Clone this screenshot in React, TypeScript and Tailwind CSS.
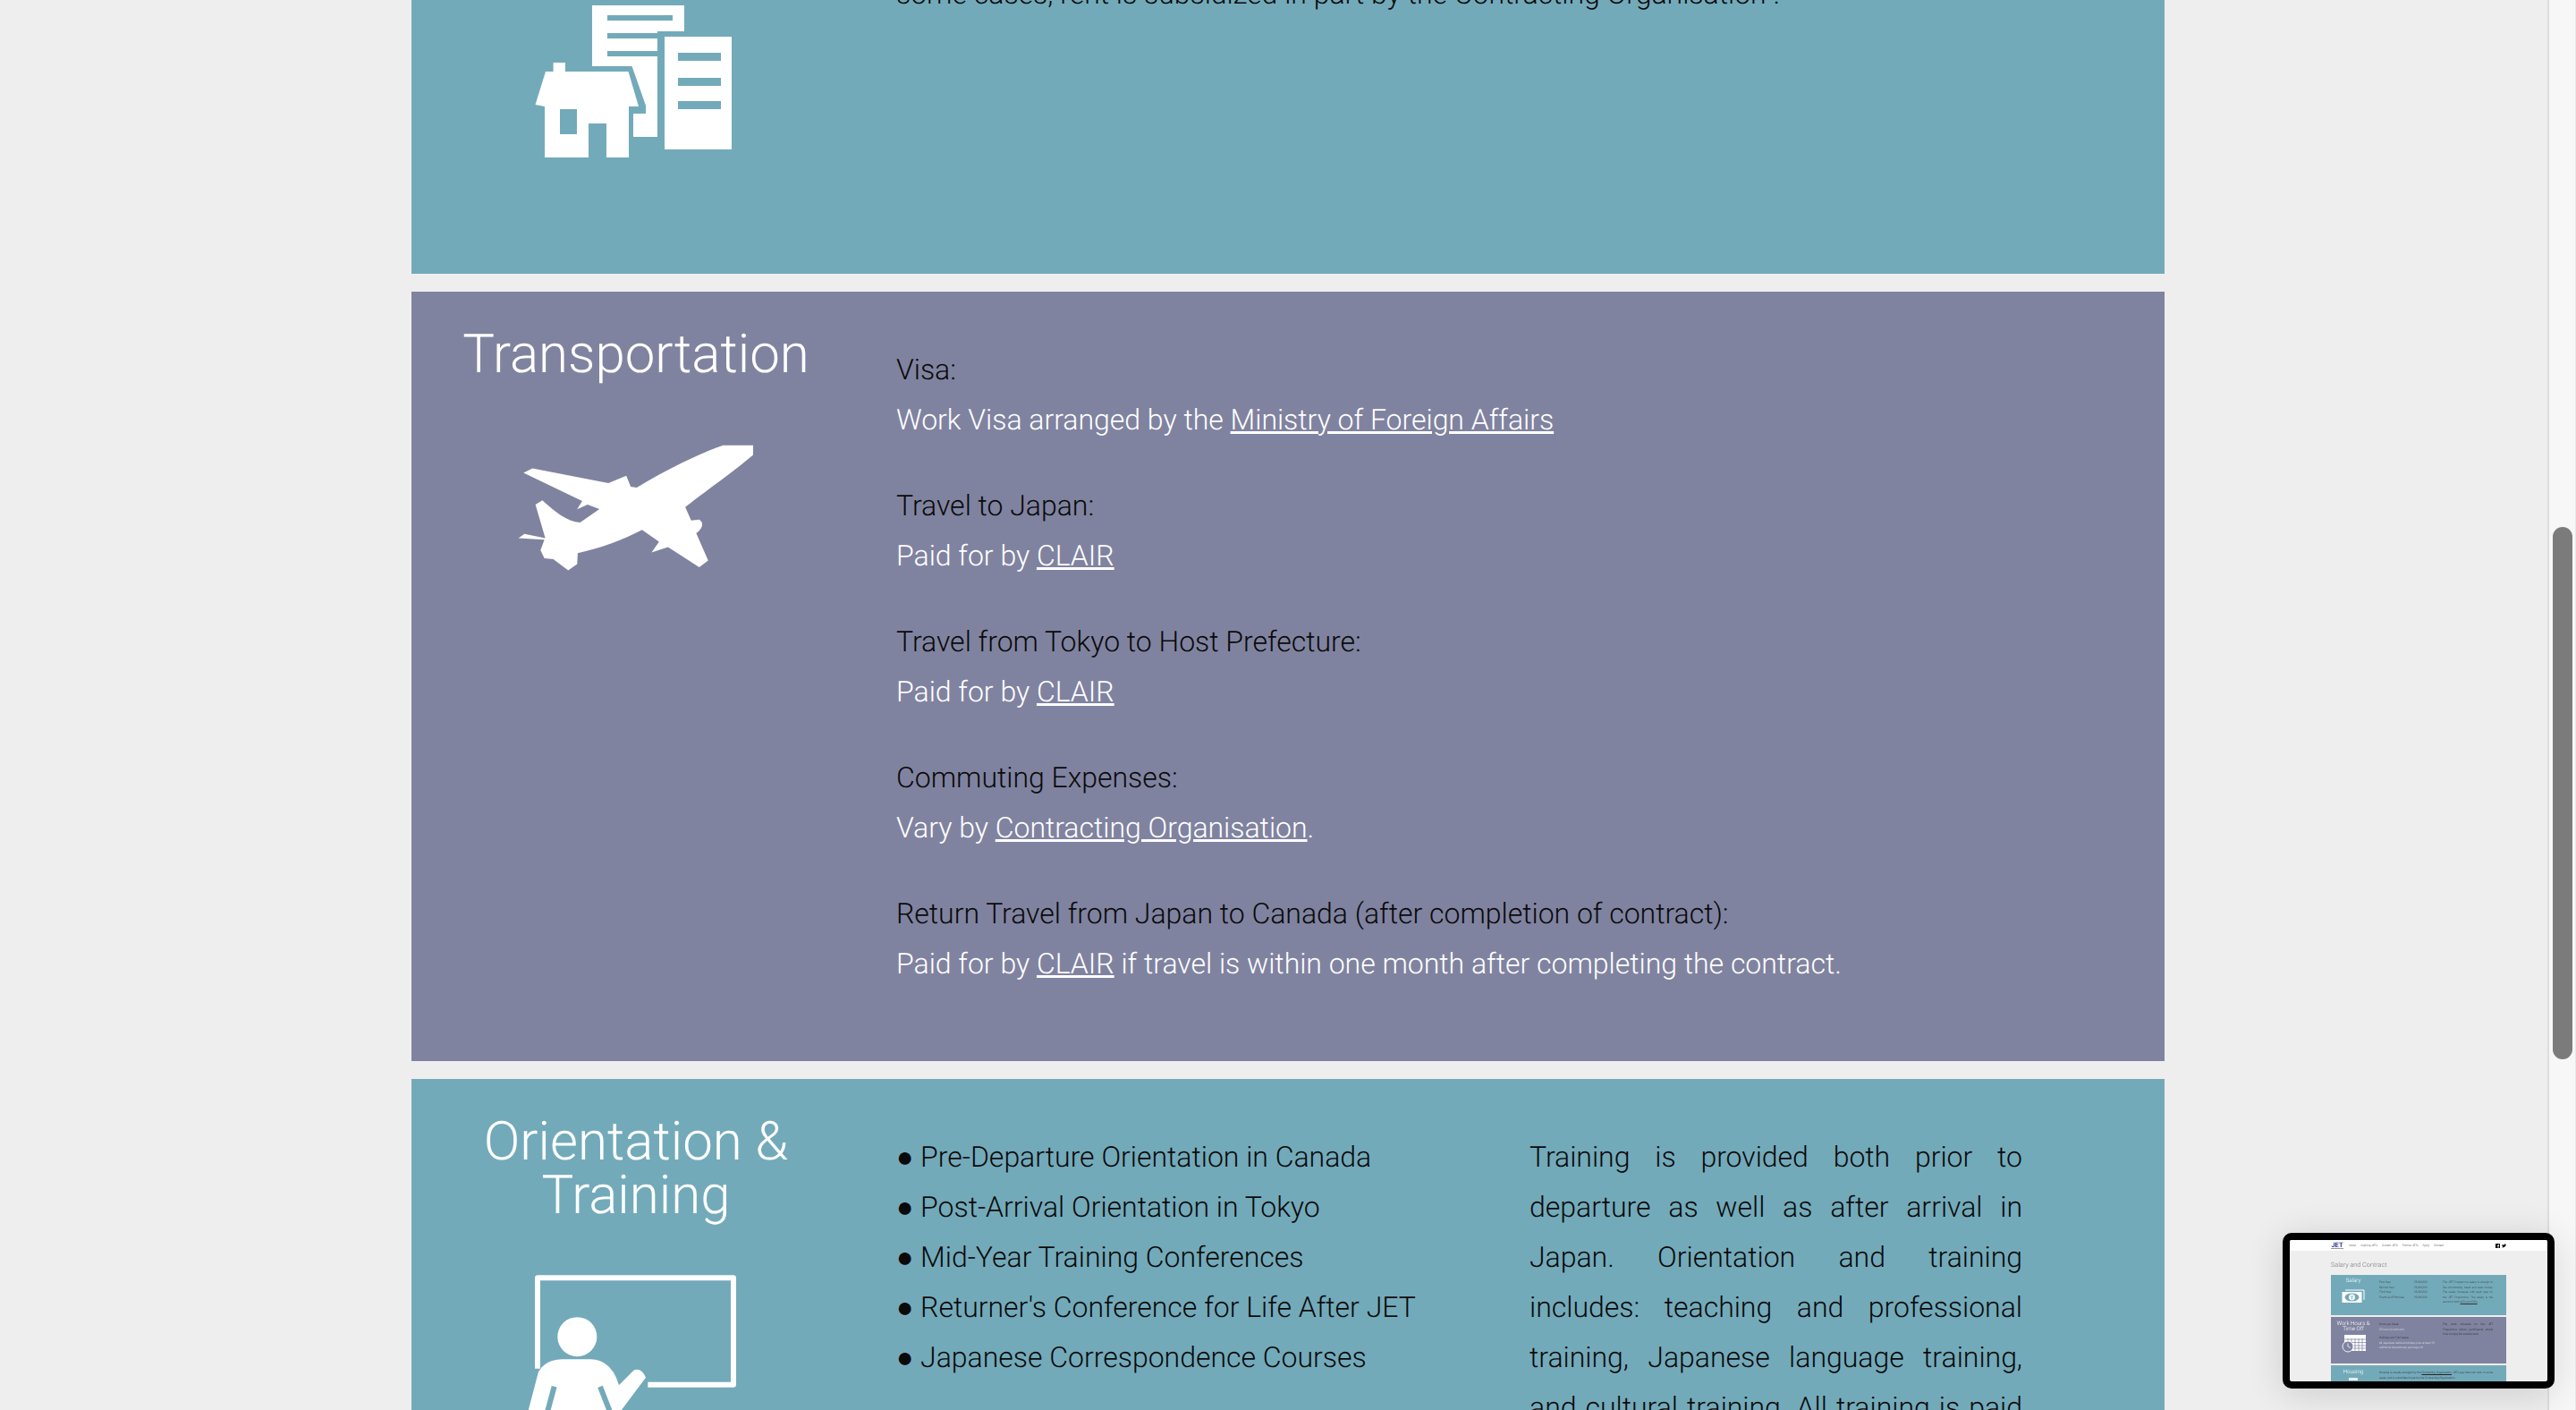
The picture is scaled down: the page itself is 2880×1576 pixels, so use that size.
import React from "react";

const Label = ({ children }: { children: React.ReactNode }) => <p className="text-[#0a0a0a]">{children}</p>;
const Value = ({ children }: { children: React.ReactNode }) => <p className="text-white">{children}</p>;
const A = ({ children }: { children: React.ReactNode }) => <a className="underline">{children}</a>;

function HouseIcon() {
  return (
    <svg viewBox="596 0 230 180" width="230" height="180" className="block mx-auto" fill="white">
      <path d="M662 6H765V35H735V153H708V127H722V118L706.5 74H662Z" />
      <rect x="743" y="41" width="75" height="126" />
      <path d="M618.6 70H632V80H702.5L714 119H703V176H678V138H658V176H609V119L598.5 117L610 80H618.6Z" />
      <g fill="#73aaba">
        <rect x="679" y="17" width="73" height="6" />
        <rect x="679" y="37" width="56" height="6" />
        <rect x="679" y="57" width="56" height="6" />
        <rect x="758" y="59" width="48" height="9" />
        <rect x="758" y="87" width="48" height="9" />
        <rect x="758" y="113" width="48" height="9" />
        <rect x="626" y="122" width="19" height="28" />
      </g>
    </svg>
  );
}

function PlaneIcon() {
  return (
    <svg viewBox="290 465 805 435" width="268" height="145" className="block mx-auto" fill="white">
      <path d="M985 473L1086 473L1086 505C1040 545 950 610 858 680L878 725L905 722Q925 735 905 760L895 768L935 860L905 882L800 815L745 833L770 797L713 757C650 790 570 820 497 835L495 872L465 893L415 855L385 852L372 825L385 790L298 785L318 770L388 785L355 672L378 658C420 695 460 730 505 732L570 687L530 672L495 688L512 660L315 565L345 550L600 600L660 575L675 612L695 615C780 565 880 510 985 473Z" />
    </svg>
  );
}

function TeacherIcon() {
  return (
    <svg viewBox="272 670 720 560" width="240" height="187" className="block mx-auto" fill="white">
      <path d="M302 990V685H959V1044H672" fill="none" stroke="white" strokeWidth="18" strokeLinejoin="round" />
      <circle cx="435" cy="883" r="66" />
      <path d="M245 1230L305 1000Q330 958 385 958H480Q550 960 575 1045L625 995Q650 985 665 1020L560 1160L540 1230Z" />
      <path d="M358 1050L335 1135M512 1050L545 1135" stroke="#73aaba" strokeWidth="18" fill="none" />
    </svg>
  );
}

function MoneyIcon() {
  return (
    <svg viewBox="0 0 26 15" width="26" height="15" className="block mx-auto mt-[6px]">
      <path d="M4 1H25V12" fill="none" stroke="white" strokeWidth="1" />
      <rect x="0.5" y="3" width="22" height="12" fill="white" />
      <ellipse cx="11.5" cy="9" rx="8" ry="4.5" fill="#73aaba" />
      <circle cx="11.5" cy="9" r="3.4" fill="white" />
      <path d="M10 7L11.5 9L13 7M11.5 9V11.5" stroke="#73aaba" strokeWidth="0.8" fill="none" />
    </svg>
  );
}

function CalendarIcon() {
  return (
    <svg viewBox="0 0 27 20" width="27" height="20" className="block mx-auto mt-[4px]">
      <rect x="3" y="0" width="24" height="18" fill="white" />
      <path d="M3 5H27M3 8.5H27M3 12H27M3 15H27M7 4V18M11 4V18M15 4V18M19 4V18M23 4V18" stroke="#8083a0" strokeWidth="0.7" />
      <circle cx="7" cy="13" r="6" fill="#8083a0" stroke="white" strokeWidth="0.9" />
      <path d="M7 9.5V13L10 14.5" stroke="white" strokeWidth="0.8" fill="none" />
    </svg>
  );
}

function Minimap() {
  return (
    <div className="absolute left-[2552px] top-[1378px] w-[304px] h-[174px] border-8 border-black rounded-[10px] shadow-[0_6px_40px_rgba(0,0,0,0.14)] overflow-hidden bg-[#eeeeee] font-['Roboto',sans-serif] font-light">
      <div className="blur-[0.6px]">
        <div className="h-3 bg-white pl-[46px] pr-[46px] flex items-center gap-[5px] text-[3.2px] leading-[4px] text-[#444]">
          <span className="w-[14px] mr-[1px] text-center font-bold text-[7.5px] leading-[7px] text-[#2f3f96] border-b border-[#999]">JET</span>
          <span>About</span>
          <span>Aspiring JETs</span>
          <span>Current JETs</span>
          <span>Former JETs</span>
          <span>Apply</span>
          <span>Contact</span>
          <span className="ml-auto flex gap-[2px]">
            <svg viewBox="0 0 5 5" width="5" height="5"><rect width="5" height="5" rx="0.5" fill="black" /><path d="M3.4 5V3H4V2.2H3.4V1.7Q3.4 1.4 4 1.5V0.8Q2.6 0.6 2.6 1.7V2.2H2V3H2.6V5Z" fill="white" /></svg>
            <svg viewBox="0 0 5 5" width="5" height="5"><path d="M0 4.2Q2 4.8 3.4 3.6Q4.6 2.6 4.5 1.4L5 0.9L4.4 1L4.8 0.5L4.1 0.8Q3.4 0.2 2.7 0.8Q2.3 1.2 2.4 1.7Q1.2 1.6 0.4 0.7Q0 1.5 0.7 2.2L0.3 2.1Q0.4 2.9 1.1 3.1L0.7 3.2Q1 3.7 1.5 3.7Q0.9 4.2 0 4.2Z" fill="black" /></svg>
          </span>
        </div>
        <div className="px-[46px] pt-[11px]">
          <div className="text-[7.3px] leading-[10px] text-[#777] mb-[6px]">Salary and Contract</div>
          <div className="h-[45px] bg-[#73aaba] flex text-[3.1px] leading-[5.5px] text-[#333] mb-[2px]">
            <div className="w-[50px] text-center text-[6.2px] leading-[7px] text-white pt-[3px]">
              Salary
              <MoneyIcon />
            </div>
            <div className="w-[39px] ml-[4px] pt-[6px]"><p>First Year</p><p>Second Year</p><p>Third Year</p><p>Fourth and Fifth Year</p></div>
            <div className="w-[32px] pt-[6px]"><p>¥3,360,000</p><p>¥3,600,000</p><p>¥3,900,000</p><p>¥3,960,000</p></div>
            <div className="w-[56px] pt-[6px] text-justify">The JET Programme salary is enough to live comfortably, travel and save money. The salary increases with each year on the JET Programme. The salary is the same for both <span className="underline">ALTs and CIRs</span>.</div>
          </div>
          <div className="h-[52px] bg-[#8083a0] flex text-[3.1px] leading-[5.5px] text-[#222] mb-[2px]">
            <div className="w-[50px] text-center text-[6.2px] leading-[6px] text-white pt-[4px]">
              Work Hours &amp; Time Off
              <CalendarIcon />
            </div>
            <div className="w-[71px] ml-[4px] pt-[6px]"><p>Hours per Week:</p><p className="text-white/80">35 hours (maximum)</p><p className="mt-1">Holidays and Paid Leave:</p><p className="text-white/80">All Japanese national holidays, plus at least 10 additional discretionary paid days off</p></div>
            <div className="w-[56px] pt-[6px] text-justify">The work schedule on the JET Programme allows participants ample time to enjoy life outside work.</div>
          </div>
          <div className="h-[20px] bg-[#73aaba] flex text-[3.1px] leading-[5.5px] text-[#222]">
            <div className="w-[50px] text-center text-[6.2px] leading-[7px] text-white pt-[4px]">
              Housing
              <div className="mx-auto mt-[3px] w-[10px] h-[3px] bg-white/80" />
            </div>
            <div className="pt-[6px] ml-[4px] w-[127px] text-justify">Housing is usually arranged by the <span className="underline">Contracting Organisation</span>. JETs pay their own rent. In some cases, rent is subsidized in part by the Contracting Organisation.</div>
          </div>
        </div>
      </div>
    </div>
  );
}

export default function App() {
  return (
    <div className="relative h-[1576px] overflow-hidden bg-[#eeeeee] font-['Roboto',sans-serif] font-light text-[32px] leading-[56px] tracking-[-0.02px] [text-rendering:geometricPrecision]">
      <div className="flex h-full">
        <main className="flex-1 pl-[460px] pr-[428px] flex flex-col gap-5 min-w-0">
          <section className="h-[306px] shrink-0 bg-[#73aaba] flex">
            <div className="w-[502px] shrink-0"><HouseIcon /></div>
            <div className="ml-[40px] -mt-[35px] text-[#0a0a0a]">
              <p>some cases, rent is subsidized in part by the Contracting Organisation .</p>
            </div>
          </section>

          <section className="h-[860px] shrink-0 bg-[#8083a0] flex">
            <div className="w-[502px] shrink-0 pt-[40px] text-center text-white text-[60px] leading-[60px]">
              <h2>Transportation</h2>
              <div className="mt-[69px]"><PlaneIcon /></div>
            </div>
            <div className="ml-[40px] pt-[59px] flex flex-col gap-10">
              <div><Label>Visa:</Label><Value>Work Visa arranged by the <A>Ministry of Foreign Affairs</A></Value></div>
              <div><Label>Travel to Japan:</Label><Value>Paid for by <A>CLAIR</A></Value></div>
              <div><Label>Travel from Tokyo to Host Prefecture:</Label><Value>Paid for by <A>CLAIR</A></Value></div>
              <div><Label>Commuting Expenses:</Label><Value>Vary by <A>Contracting Organisation</A>.</Value></div>
              <div><Label>Return Travel from Japan to Canada (after completion of contract):</Label><Value>Paid for by <A>CLAIR</A> if travel is within one month after completing the contract.</Value></div>
            </div>
          </section>

          <section className="flex-1 min-h-0 bg-[#73aaba] flex overflow-hidden">
            <div className="w-[502px] shrink-0 pt-[40px] text-center text-white text-[60px] leading-[60px]">
              <h2>Orientation &amp; Training</h2>
              <div className="mt-[57px]"><TeacherIcon /></div>
            </div>
            <div className="ml-[40px] pt-[59px] w-[708px] shrink-0 text-[#0a0a0a]">
              <p>● Pre-Departure Orientation in Canada</p>
              <p>● Post-Arrival Orientation in Tokyo</p>
              <p>● Mid-Year Training Conferences</p>
              <p>● Returner's Conference for Life After JET</p>
              <p>● Japanese Correspondence Courses</p>
            </div>
            <div className="pt-[59px] w-[551px] shrink-0 text-justify text-[#0a0a0a]">
              Training is provided both prior to departure as well as after arrival in Japan. Orientation and training includes: teaching and professional training, Japanese language training, and cultural training. All training is paid for by the Contracting Organisation.
            </div>
          </section>
        </main>
        <aside className="w-[32px] shrink-0 h-full bg-[#f7f7f7] border-l-2 border-[#dddddd] border-r border-r-[#e8e8e8] pt-[589px] pl-[4px]">
          <div className="w-[22px] h-[595px] rounded-[11px] bg-[#7b7b7b]" />
        </aside>
      </div>
      <Minimap />
    </div>
  );
}
